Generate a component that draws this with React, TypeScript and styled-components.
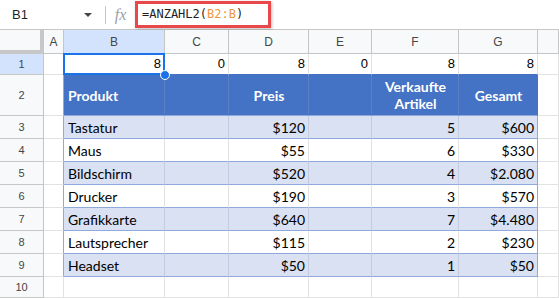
import React from "react";
import styled, { createGlobalStyle } from "styled-components";

const GlobalStyle = createGlobalStyle`
  html, body { margin: 0; padding: 0; background: #fff; overflow: hidden; }
  * { box-sizing: border-box; }
`;

const Page = styled.div`
  width: 559px;
  height: 298px;
  display: flex;
  flex-direction: column;
  font-family: "Liberation Sans", Arial, sans-serif;
  overflow: hidden;
`;

const TopBar = styled.div`
  height: 30px;
  display: flex;
  align-items: center;
  border-bottom: 1px solid #c4c7c5;
  background: #fff;
`;

const NameBox = styled.div`
  width: 105px;
  display: flex;
  align-items: center;
  justify-content: space-between;
  padding: 0 13px 0 12px;
  font-size: 13px;
  color: #1f1f1f;
`;

const Caret = styled.span`
  width: 0;
  height: 0;
  border-left: 4px solid transparent;
  border-right: 4px solid transparent;
  border-top: 4px solid #444746;
`;

const Separator = styled.span`
  width: 1px;
  height: 18px;
  background: #c4c7c5;
`;

const Fx = styled.span`
  width: 29px;
  text-align: center;
  font-family: "Liberation Serif", serif;
  font-style: italic;
  font-size: 16px;
  color: #9aa0a6;
`;

const FormulaBox = styled.div`
  width: 136px;
  height: 27px;
  margin-top: -1px;
  display: flex;
  align-items: center;
  padding-left: 4px;
  border: 3px solid #e8484a;
  box-shadow: 1px 1px 3px rgba(0, 0, 0, 0.25);
  font-family: "DejaVu Sans Mono", monospace;
  font-size: 12px;
  color: #1f1f1f;
  white-space: pre;
`;

const Ref = styled.span`
  color: #f0963f;
`;

const Sheet = styled.div`
  display: grid;
  grid-template-columns: 44px 20px 101px 64px 80px 63px 87px 79px 1fr;
  grid-template-rows: 24px 21px 41px repeat(7, 23px) 21px;
`;

const Corner = styled.div`
  background: #f8f9fa;
  border-right: 4px solid #c7c7c7;
  border-bottom: 4px solid #c7c7c7;
`;

const ColHeader = styled.div<{ $selected?: boolean }>`
  display: flex;
  align-items: center;
  justify-content: center;
  background: ${(p) => (p.$selected ? "#d3e3fd" : "#f8f9fa")};
  border-right: 1px solid #c4c7c5;
  border-bottom: 1px solid #c4c7c5;
  font-size: 12px;
  color: #444746;
`;

const RowHeader = styled.div<{ $selected?: boolean }>`
  display: flex;
  align-items: center;
  justify-content: center;
  background: ${(p) => (p.$selected ? "#d3e3fd" : "#f8f9fa")};
  border-right: 1px solid #c4c7c5;
  border-bottom: 1px solid #c4c7c5;
  font-size: 11px;
  color: #444746;
`;

type Tone = "plain" | "band" | "head";

const Cell = styled.div<{
  $tone: Tone;
  $align: "left" | "right" | "center";
  $right: string;
  $bottom: string;
  $calibri?: boolean;
}>`
  position: relative;
  display: flex;
  align-items: ${(p) => (p.$tone === "head" ? "center" : "flex-end")};
  justify-content: ${(p) =>
    p.$align === "left" ? "flex-start" : p.$align === "right" ? "flex-end" : "center"};
  text-align: ${(p) => p.$align};
  padding: ${(p) => (p.$tone === "head" ? "0 3px 0 4px" : "0 3px 2px 4px")};
  background: ${(p) =>
    p.$tone === "head" ? "#4472c4" : p.$tone === "band" ? "#d9e1f2" : "#fff"};
  border-right: 1px solid ${(p) => p.$right};
  border-bottom: 1px solid ${(p) => p.$bottom};
  font-family: ${(p) =>
    p.$calibri ? '"Lato", "Liberation Sans", sans-serif' : '"Liberation Sans", Arial, sans-serif'};
  font-size: ${(p) => (p.$calibri ? "14px" : "13px")};
  font-weight: ${(p) => (p.$tone === "head" ? 700 : 400)};
  line-height: ${(p) => (p.$tone === "head" ? "17px" : "16px")};
  color: ${(p) => (p.$tone === "head" ? "#fff" : "#000")};
  white-space: pre;
`;

const Selection = styled.div`
  position: absolute;
  left: -1px;
  top: -1px;
  right: -1px;
  bottom: -1px;
  border: 2px solid #1a73e8;
  pointer-events: none;
`;

const FillHandle = styled.div`
  position: absolute;
  right: -6px;
  bottom: -6px;
  width: 10px;
  height: 10px;
  border-radius: 50%;
  background: #1a73e8;
  border: 1.5px solid #fff;
  z-index: 2;
`;

const cols = ["A", "B", "C", "D", "E", "F", "G", ""];

const row1 = ["", "8", "0", "8", "0", "8", "8", ""];
const head = ["", "Produkt", "", "Preis", "", "Verkaufte\nArtikel", "Gesamt", ""];
const data: string[][] = [
  ["Tastatur", "$120", "5", "$600"],
  ["Maus", "$55", "6", "$330"],
  ["Bildschirm", "$520", "4", "$2.080"],
  ["Drucker", "$190", "3", "$570"],
  ["Grafikkarte", "$640", "7", "$4.480"],
  ["Lautsprecher", "$115", "2", "$230"],
  ["Headset", "$50", "1", "$50"],
];

const GRID = "#e2e2e2";
const TBL = "#8eaadb";

export default function App() {
  const rows: React.ReactNode[] = [];

  // Row 1
  rows.push(<RowHeader key="rh1" $selected>1</RowHeader>);
  row1.forEach((v, i) => {
    const inTable = i >= 1 && i <= 6;
    rows.push(
      <Cell
        key={`r1-${i}`}
        $tone="plain"
        $align="right"
        $right={GRID}
        $bottom={inTable ? "#4472c4" : GRID}
      >
        {v}
        {i === 1 && (
          <>
            <Selection />
            <FillHandle />
          </>
        )}
      </Cell>
    );
  });

  // Row 2 header
  rows.push(<RowHeader key="rh2">2</RowHeader>);
  head.forEach((v, i) => {
    if (i === 0 || i === 7) {
      rows.push(
        <Cell key={`r2-${i}`} $tone="plain" $align="left" $right={i === 0 ? TBL : GRID} $bottom={GRID} />
      );
      return;
    }
    rows.push(
      <Cell
        key={`r2-${i}`}
        $tone="head"
        $align={i === 1 ? "left" : "center"}
        $right={i === 6 ? "#4472c4" : "#5b7fc7"}
        $bottom={TBL}
        $calibri
      >
        {v}
      </Cell>
    );
  });

  // Data rows
  data.forEach((d, r) => {
    const band = r % 2 === 0;
    const rn = r + 3;
    rows.push(<RowHeader key={`rh${rn}`}>{rn}</RowHeader>);
    const vals = ["", d[0], "", d[1], "", d[2], d[3], ""];
    vals.forEach((v, i) => {
      if (i === 0 || i === 7) {
        rows.push(
          <Cell key={`r${rn}-${i}`} $tone="plain" $align="left" $right={i === 0 ? TBL : GRID} $bottom={GRID} />
        );
        return;
      }
      rows.push(
        <Cell
          key={`r${rn}-${i}`}
          $tone={band ? "band" : "plain"}
          $align={i === 1 ? "left" : "right"}
          $right={i === 6 ? TBL : band ? "#c3cbe0" : GRID}
          $bottom={TBL}
          $calibri
        >
          {v}
        </Cell>
      );
    });
  });

  // Row 10
  rows.push(<RowHeader key="rh10">10</RowHeader>);
  cols.forEach((_, i) => {
    rows.push(<Cell key={`r10-${i}`} $tone="plain" $align="left" $right={GRID} $bottom={GRID} />);
  });

  return (
    <Page>
      <GlobalStyle />
      <TopBar>
        <NameBox>
          B1
          <Caret />
        </NameBox>
        <Separator />
        <Fx>fx</Fx>
        <FormulaBox>
          =ANZAHL2(<Ref>B2:B</Ref>)
        </FormulaBox>
      </TopBar>
      <Sheet>
        <Corner />
        {cols.map((c, i) => (
          <ColHeader key={`ch${i}`} $selected={c === "B"}>
            {c}
          </ColHeader>
        ))}
        {rows}
      </Sheet>
    </Page>
  );
}
